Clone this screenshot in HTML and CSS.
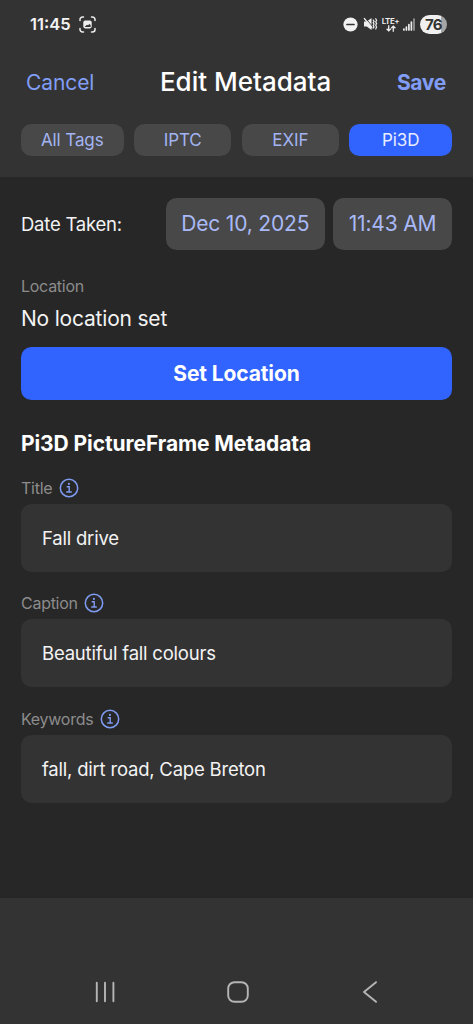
FILE: index.html
```html
<!DOCTYPE html>
<html lang="en">
<head>
<meta charset="utf-8">
<meta name="viewport" content="width=device-width">
<title>Edit Metadata</title>
<link rel="stylesheet" href="styles.css">
</head>
<body>
<div class="app">
  <header class="header">
    <div class="status">
      <div class="status-left">
        <span class="clock">11:45</span>
        <svg class="capture" width="17" height="17" viewBox="0 0 17 17" fill="none" stroke="#eee" stroke-width="1.5" stroke-linecap="round">
          <path d="M1 4.5V3.5A2.5 2.5 0 0 1 3.500 1H4.500M12.500 1h1A2.500 2.500 0 0 1 16 3.500v1M16 12.500v1a2.500 2.500 0 0 1-2.500 2.500h-1M4.500 16h-1A2.500 2.500 0 0 1 1 13.500v-1"/>
          <rect x="4.300" y="4.600" width="8.400" height="7.800" rx="1.800" fill="#eee" stroke="none"/>
          <path d="M5.600 10.900 7.900 8.700l1.100.6 1.500-1.300 1.100 1.100v1.800z" fill="#333" stroke="none"/>
        </svg>
      </div>
      <div class="status-right">
        <svg class="dnd" width="15" height="15" viewBox="0 0 15 15"><circle cx="7.500" cy="7.500" r="7.100" fill="#f2f2f2"/><path d="M4 7.500h7" stroke="#333" stroke-width="1.700" stroke-linecap="round"/></svg>
        <svg class="mute" width="15" height="14" viewBox="0 0 15 14" fill="none" stroke="#eee" stroke-linecap="round">
          <path d="M1 4.500h2.800L8.500 1v12L3.800 9.500H1z" fill="#eee" stroke="none"/>
          <path d="M2.200 1 9.200 9" stroke="#333" stroke-width="1"/>
          <path d="M1.300 1.500 8.900 10.500" stroke="#eee" stroke-width="1.200"/>
          <path d="M10.200 3 11.100 4.300 10.200 5.700 11.100 7.100 10.200 8.500 11.100 9.900 10.200 11.200M12.700 1.700 13.600 3.200 12.700 4.900 13.600 6.600 12.700 8.300 13.600 10 12.700 12" stroke-width="1.200"/>
        </svg>
        <div class="network">
          <span class="lte">LTE+</span>
          <svg width="10" height="7" viewBox="0 0 10 7" fill="none" stroke="#eee" stroke-width="1.300"><path d="M2.700.3v5.500M.6 3.800l2.100 2.100 2.100-2.100M7.300 6.700V1.200M5.200 3.200l2.100-2.100 2.100 2.100"/></svg>
        </div>
        <svg class="signal" width="12" height="13" viewBox="0 0 12 13" stroke-width="1.700" stroke-linecap="round" stroke="#eee"><path d="M.9 12v-1M3.400 12V9M5.900 12V6.500M8.400 12V4"/><path d="M11 12V1.200" stroke="#999"/></svg>
        <span class="battery">76</span>
      </div>
    </div>
    <div class="titlebar">
      <a class="cancel">Cancel</a>
      <h1 class="title">Edit Metadata</h1>
      <a class="save">Save</a>
    </div>
    <nav class="tabs">
      <a class="tab">All Tags</a><a class="tab">IPTC</a><a class="tab">EXIF</a><a class="tab active">Pi3D</a>
    </nav>
  </header>
  <main class="content">
    <div class="date-row">
      <span class="date-label">Date Taken:</span>
      <button class="picker date">Dec 10, 2025</button>
      <button class="picker time">11:43 AM</button>
    </div>
    <div class="label location-label">Location</div>
    <div class="location-value">No location set</div>
    <button class="set-location">Set Location</button>
    <h2 class="section-title">Pi3D PictureFrame Metadata</h2>
    <div class="field">
      <div class="label">Title <svg class="info" width="20" height="20" viewBox="0 0 20 20" fill="none" stroke="#7f9bf2" stroke-width="1.500"><circle cx="10" cy="10" r="8.700"/><path d="M7.700 8.700h2.500v5M7.200 14h5.600" stroke-width="1.400"/><circle cx="9.900" cy="5.900" r="1.050" fill="#7f9bf2" stroke="none"/></svg></div>
      <div class="input">Fall drive</div>
    </div>
    <div class="field">
      <div class="label">Caption <svg class="info" width="20" height="20" viewBox="0 0 20 20" fill="none" stroke="#7f9bf2" stroke-width="1.500"><circle cx="10" cy="10" r="8.700"/><path d="M7.700 8.700h2.500v5M7.200 14h5.600" stroke-width="1.400"/><circle cx="9.900" cy="5.900" r="1.050" fill="#7f9bf2" stroke="none"/></svg></div>
      <div class="input">Beautiful fall colours</div>
    </div>
    <div class="field">
      <div class="label">Keywords <svg class="info" width="20" height="20" viewBox="0 0 20 20" fill="none" stroke="#7f9bf2" stroke-width="1.500"><circle cx="10" cy="10" r="8.700"/><path d="M7.700 8.700h2.500v5M7.200 14h5.600" stroke-width="1.400"/><circle cx="9.900" cy="5.900" r="1.050" fill="#7f9bf2" stroke="none"/></svg></div>
      <div class="input">fall, dirt road, Cape Breton</div>
    </div>
  </main>
  <footer class="footer">
    <svg width="22" height="22" viewBox="0 0 22 22" stroke="#b5b5b5" stroke-width="1.900" stroke-linecap="round"><path d="M2.800 1.800v18.400M11 1.800v18.400M19.400 1.800v18.400"/></svg>
    <svg width="22" height="22" viewBox="0 0 22 22" fill="none" stroke="#b5b5b5" stroke-width="1.900"><rect x="1.200" y="1.200" width="19.600" height="19.600" rx="6.300"/></svg>
    <svg width="22" height="22" viewBox="0 0 22 22" fill="none" stroke="#b5b5b5" stroke-width="1.900" stroke-linecap="round" stroke-linejoin="round"><path d="M17 1.200 5 11l12 9.800"/></svg>
  </footer>
</div>
</body>
</html>
```
FILE: styles.css
```css
* { box-sizing: border-box; }
body { margin: 0; background: #272727; color: #f3f3f3; font-family: Inter, "Liberation Sans", sans-serif; }
h1, h2 { margin: 0; }
button { border: 0; padding: 0; font-family: inherit; }
svg { display: block; flex: none; }
.app { width: 473px; height: 1024px; display: flex; flex-direction: column; }

.header { height: 176.500px; background: #333; flex: none; }
.status { height: 48px; display: flex; justify-content: space-between; align-items: center; padding: 0 26px 0 30px; }
.status-left, .status-right { display: flex; align-items: center; }
.clock { font-size: 16.500px; font-weight: 600; }
.capture { margin-left: 8px; }
.mute { margin-left: 5px; }
.network { margin-left: 4px; width: 17px; display: flex; flex-direction: column; align-items: center; }
.lte { font-size: 8px; line-height: 8px; font-weight: 600; letter-spacing: -.4px; white-space: nowrap; }
.signal { margin-left: 4px; }
.battery { margin-left: 5px; width: 27px; height: 19px; border-radius: 10px; background: linear-gradient(90deg, #f0f0f0 78%, #a5a5a5 78%); color: #333; font-size: 15px; line-height: 19px; font-weight: 700; letter-spacing: -.6px; text-align: center; }

.titlebar { height: 68px; padding: 0 27px 0 26px; display: flex; justify-content: space-between; align-items: center; }
.cancel, .save { font-size: 21px; color: #819df5; }
.cancel { letter-spacing: -.1px; }
.save { font-weight: 700; letter-spacing: -.3px; }
.title { font-size: 26px; line-height: 30px; font-weight: 500; color: #fff; }
.tabs { margin-top: 8px; padding: 0 21px; display: grid; grid-template-columns: 102.500px 97px 97px 102.500px; justify-content: space-between; }
.tab { height: 31.500px; border-radius: 10.500px; background: #484848; color: #a3b4f2; font-size: 17px; line-height: 32px; text-align: center; letter-spacing: -.1px; }
.tab.active { background: #3164ff; color: #e8edff; }

.content { flex: 1; padding: 21px 21px 0; }
.date-row { display: flex; align-items: center; height: 52.500px; }
.date-label { flex: 1; font-size: 18.500px; letter-spacing: -.23px; }
.picker { height: 52.500px; border-radius: 10.500px; background: #484848; color: #a9b9f6; font-size: 21px; letter-spacing: -.17px; }
.date { width: 159.500px; margin-right: 8px; }
.time { width: 119px; }
.label { height: 20px; display: flex; align-items: center; font-size: 16px; letter-spacing: -.27px; color: #8c8c8c; }
.location-label { margin-top: 26px; }
.location-value { margin-top: 8px; height: 30px; font-size: 21px; line-height: 30px; letter-spacing: -.2px; }
.set-location { display: block; width: 100%; margin-top: 13px; height: 52.500px; border-radius: 10.500px; background: #3164ff; color: #fff; font-size: 21px; font-weight: 700; letter-spacing: -.12px; }
.section-title { margin-top: 30px; height: 28px; font-size: 21px; line-height: 28px; font-weight: 700; letter-spacing: -.09px; color: #fff; }
.field { margin-top: 21px; }
.section-title + .field { margin-top: 20px; }
.info { margin-left: 6.500px; }
.input { margin-top: 6px; height: 68px; border-radius: 10.500px; background: #333; padding: 0 21px; font-size: 18.500px; line-height: 69px; letter-spacing: -.21px; }
.field + .field { margin-top: 21.500px; }

.footer { height: 126px; flex: none; background: #333; padding: 82.500px 92px 0 94px; display: flex; justify-content: space-between; }
```
